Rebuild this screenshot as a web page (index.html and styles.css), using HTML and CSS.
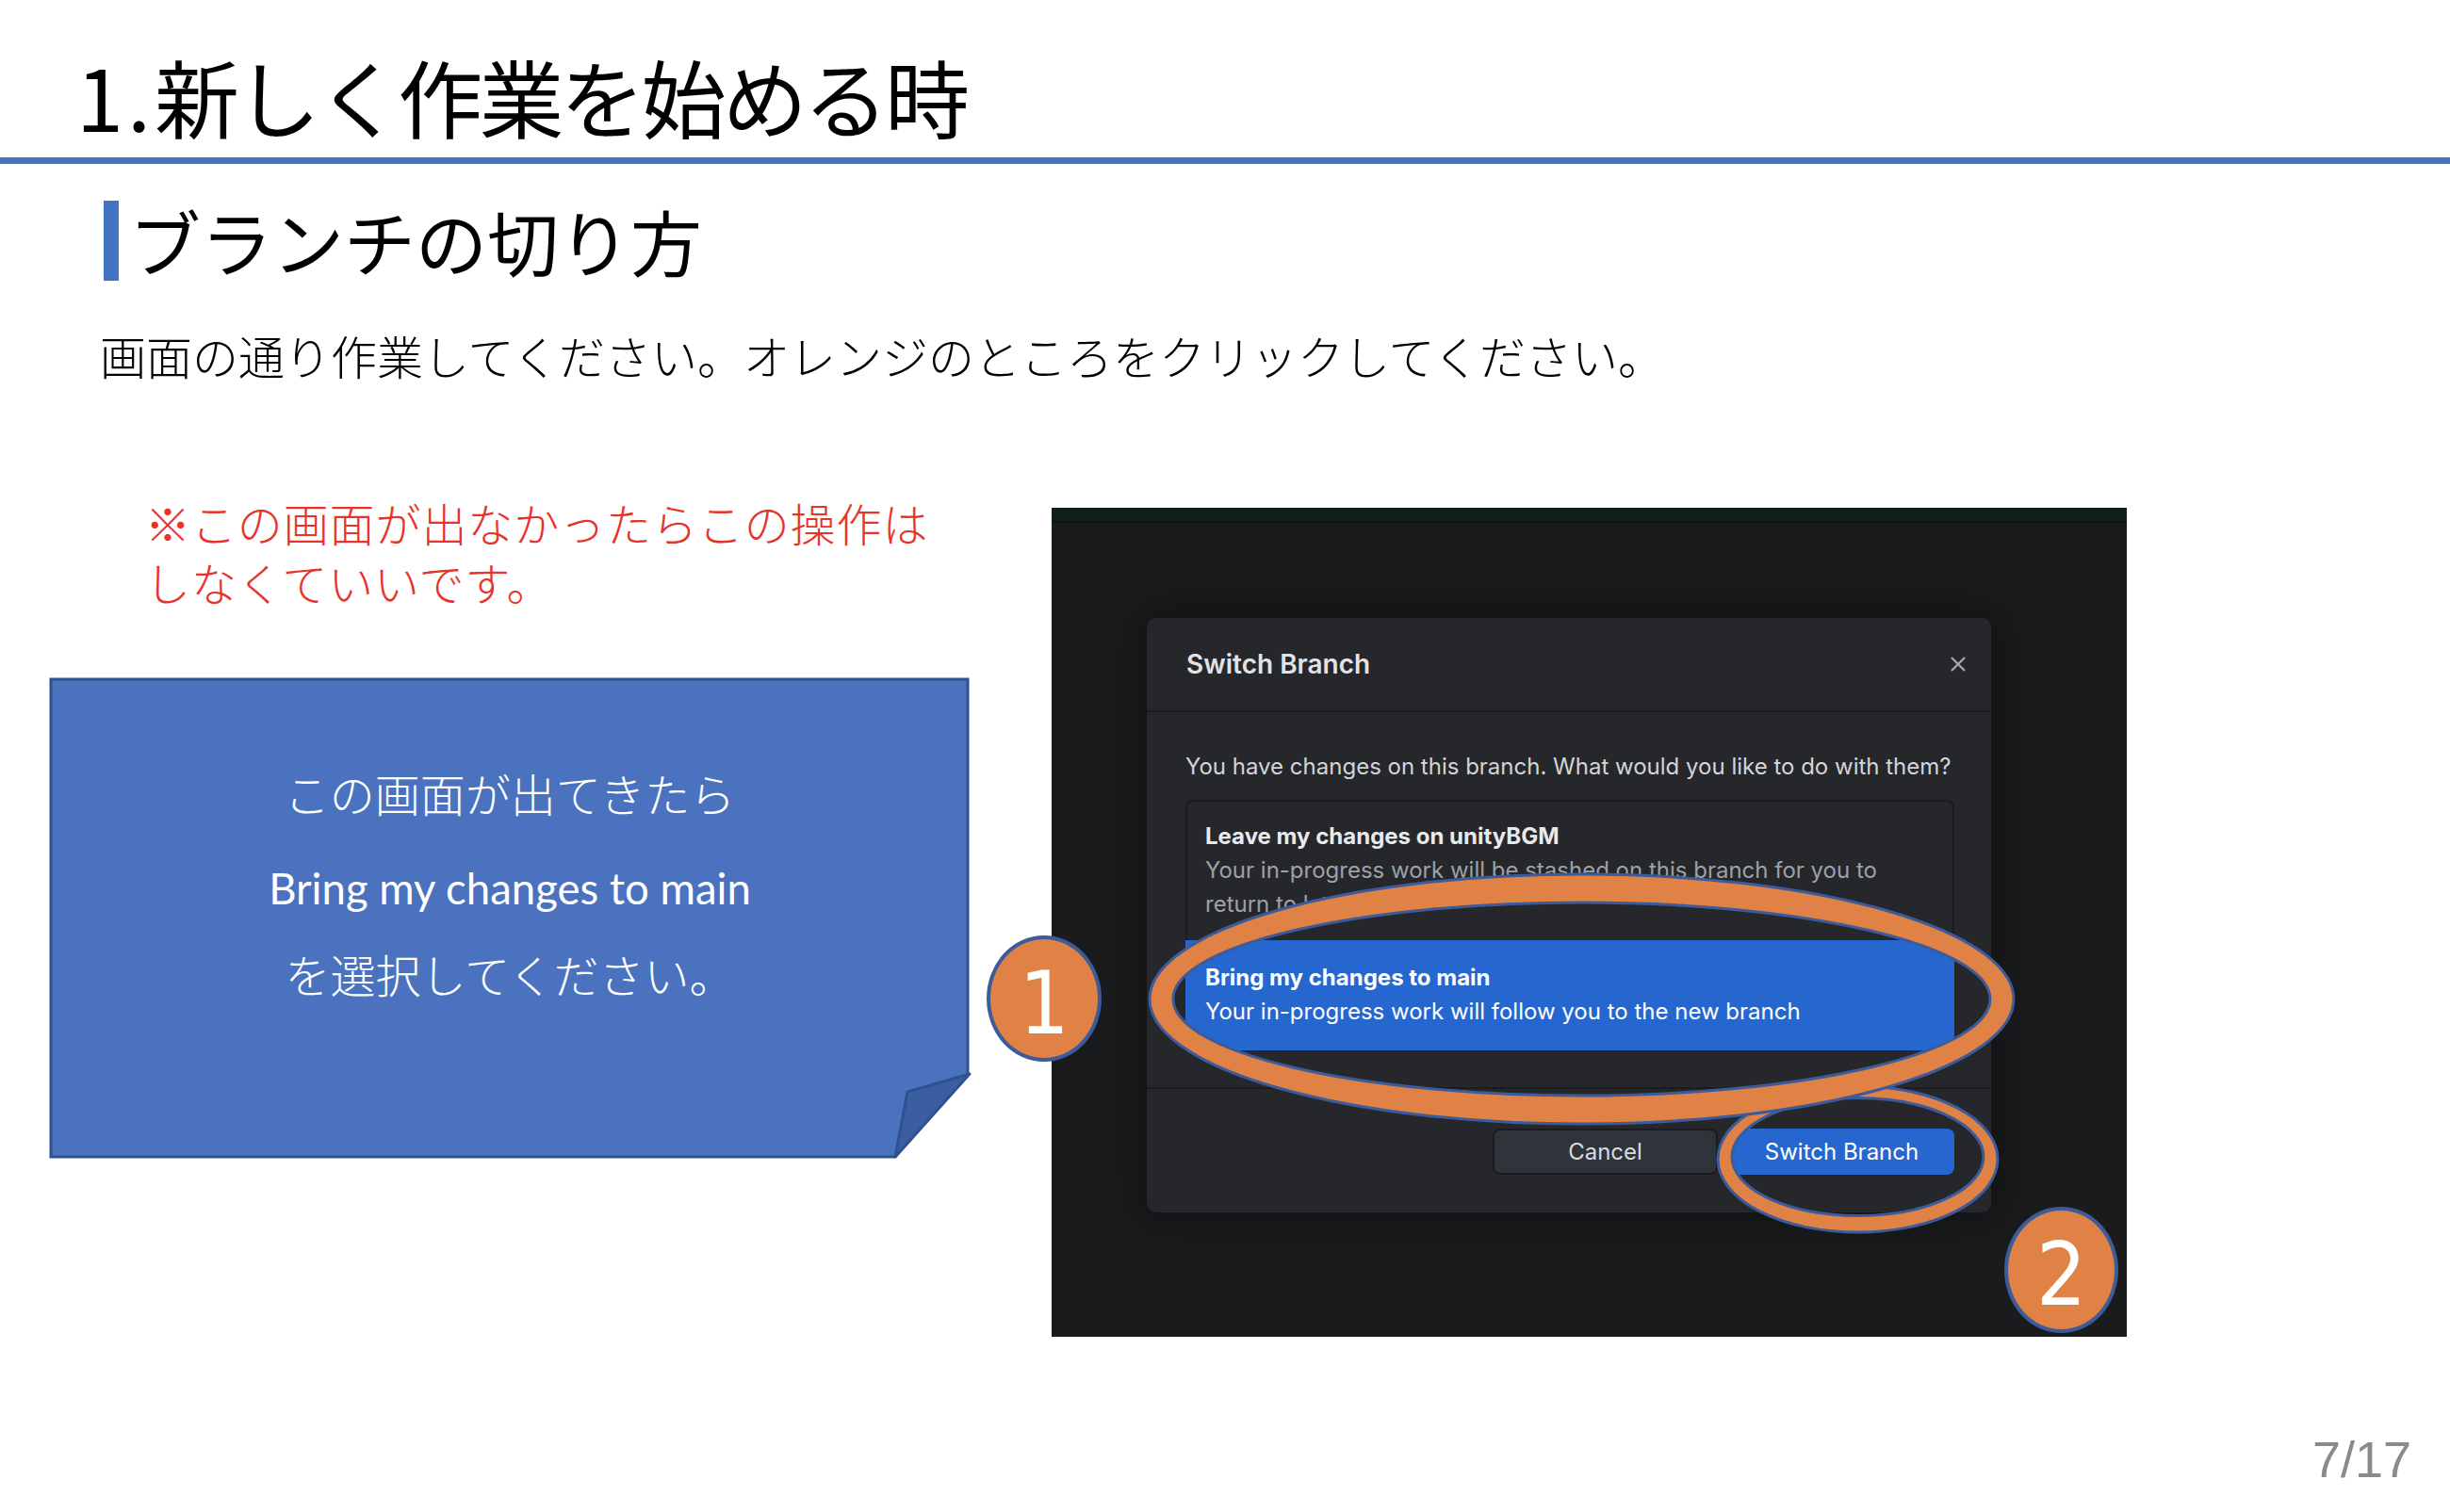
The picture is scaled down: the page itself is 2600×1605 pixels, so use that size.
FILE: index.html
```html
<!DOCTYPE html>
<html lang="ja">
<head>
<meta charset="utf-8">
<title>1.新しく作業を始める時</title>
<link rel="stylesheet" href="styles.css">
</head>
<body>
<div class="slide">
  <h1 class="title"><span class="num">1.</span>新しく作業を始める時</h1>
  <div class="rule"></div>
  <h2 class="subhead"><span class="bar"></span><span class="subhead-text">ブランチの切り方</span></h2>
  <p class="lead">画面の通り作業してください。オレンジのところをクリックしてください。</p>

  <div class="content">
    <div class="left">
      <p class="note">※この画面が出なかったらこの操作は<br>しなくていいです。</p>
      <div class="callout">
        <svg class="callout-shape" viewBox="0 0 978 512" width="978" height="512">
          <polygon class="callout-body" points="2,2 975,2 975,422 898,509 2,509"/>
          <polygon class="callout-fold" points="911,440 977,421 898,509"/>
        </svg>
        <div class="callout-text">
          <div class="cl">この画面が出てきたら</div>
          <div class="cl en">Bring my changes to main</div>
          <div class="cl">を選択してください。</div>
        </div>
      </div>
    </div>

    <div class="shot">
      <div class="shot-top"></div>
      <div class="dialog">
        <div class="dlg-head">
          <span class="dlg-title">Switch Branch</span>
          <svg class="dlg-close" viewBox="0 0 20 20" width="20" height="20"><path d="M3 3 L17 17 M17 3 L3 17"/></svg>
        </div>
        <div class="dlg-body">
          <p class="dlg-q">You have changes on this branch. What would you like to do with them?</p>
          <div class="opt opt-leave">
            <div class="opt-title">Leave my changes on unityBGM</div>
            <div class="opt-desc">Your in-progress work will be stashed on this branch for you to<br>return to later</div>
          </div>
          <div class="opt opt-bring">
            <div class="opt-title">Bring my changes to main</div>
            <div class="opt-desc">Your in-progress work will follow you to the new branch</div>
          </div>
        </div>
        <div class="dlg-foot">
          <button class="btn btn-cancel">Cancel</button>
          <button class="btn btn-primary">Switch Branch</button>
        </div>
      </div>
    </div>
  </div>

  <svg class="marks" viewBox="0 0 2600 1605" width="2600" height="1605">
    <path class="ring" fill-rule="evenodd" d="M1823,1230.5 a148.5,77.5 0 1,0 297,0 a148.5,77.5 0 1,0 -297,0 Z M1838,1228 a133.5,62.5 0 1,0 267,0 a133.5,62.5 0 1,0 -267,0 Z"/>
    <path class="ring" fill-rule="evenodd" d="M1220,1060.5 a458.5,132.5 0 1,0 917,0 a458.5,132.5 0 1,0 -917,0 Z M1245,1060.5 a433.5,102.5 0 1,0 867,0 a433.5,102.5 0 1,0 -867,0 Z"/>
  </svg>
  <div class="badge badge-1">1</div>
  <div class="badge badge-2">2</div>

  <div class="pagenum">7/17</div>
</div>
</body>
</html>
```

FILE: styles.css
```css
* { box-sizing: border-box; }
html, body { margin: 0; padding: 0; }
body {
  background: #fff;
  font-family: "Noto Sans CJK JP", sans-serif;
}
.slide {
  position: relative;
  width: 2600px;
  height: 1605px;
  overflow: hidden;
  background: #fff;
}
.title {
  margin: 0;
  height: 167px;
  padding: 56px 0 0 81px;
  font-size: 90px;
  line-height: 90px;
  font-weight: 400;
  letter-spacing: -3.9px;
  color: #000;
}
.title .num {
  letter-spacing: 4px;
}
.rule {
  height: 7px;
  background: #4472c4;
}
.subhead {
  display: flex;
  align-items: center;
  gap: 11px;
  margin: 39px 0 0 110px;
  height: 85px;
  font-size: 76px;
  line-height: 85px;
  font-weight: 400;
  letter-spacing: 0px;
  color: #000;
}
.subhead .bar {
  width: 16px;
  height: 85px;
  background: #4472c4;
}
.lead {
  margin: 49px 0 0 106px;
  font-size: 49px;
  line-height: 60px;
  font-weight: 300;
  color: #000;
}
.content {
  display: grid;
  grid-template-columns: 1116px 1141px;
  margin-top: 116px;
}
.note {
  margin: 0 0 0 154px;
  font-size: 48px;
  line-height: 63px;
  font-weight: 300;
  letter-spacing: 0.9px;
  color: #e8332a;
}
.callout {
  position: relative;
  margin: 70px 0 0 52px;
  width: 978px;
  height: 512px;
}
.callout-shape {
  position: absolute;
  left: 0;
  top: 0;
  overflow: visible;
}
.callout-body {
  fill: #4a72bf;
  stroke: #2f528f;
  stroke-width: 3;
}
.callout-fold {
  fill: #3b5ea3;
  stroke: #2f528f;
  stroke-width: 3;
  stroke-linejoin: round;
}
.callout-text {
  position: relative;
  padding-top: 74px;
  text-align: center;
  color: #fff;
  font-size: 48px;
  line-height: 96px;
  font-weight: 300;
}
.callout-text .en {
  font-family: Lato, "Noto Sans", sans-serif;
  font-size: 45.5px;
  font-weight: 400;
  padding-top: 12px;
  line-height: 84px;
}

/* screenshot */
.shot {
  margin-top: 16px;
  width: 1141px;
  height: 880px;
  background: #1a1b1d;
  display: flex;
  flex-direction: column;
  overflow: hidden;
}
.shot-top {
  height: 16px;
  flex: none;
  background: #12201a;
  border-bottom: 2px solid #111213;
}
.dialog {
  margin: 101px 0 0 101px;
  width: 896px;
  height: 631px;
  flex: none;
  background: #25272b;
  border-radius: 10px;
  box-shadow: 0 0 40px 12px rgba(0, 0, 0, 0.3);
  font-family: Inter, "Liberation Sans", sans-serif;
  display: flex;
  flex-direction: column;
  overflow: hidden;
}
.dlg-head {
  height: 100px;
  flex: none;
  border-bottom: 2px solid #1b1c1f;
  display: flex;
  align-items: center;
  justify-content: space-between;
  padding: 0 25px 0 42px;
}
.dlg-title {
  font-size: 28px;
  font-weight: 600;
  color: #e1e3e6;
}
.dlg-close path {
  stroke: #a3a7ad;
  stroke-width: 2.4;
  fill: none;
}
.dlg-body {
  padding: 40px 39px 39px 41px;
  border-bottom: 2px solid #1b1c1f;
}
.dlg-q {
  margin: 0 0 18px;
  font-size: 24px;
  line-height: 35px;
  color: #d3d5d9;
}
.opt {
  font-size: 24px;
  line-height: 36px;
}
.opt-title {
  font-weight: 700;
}
.opt-leave {
  border: 2px solid #1b1c1f;
  border-bottom: none;
  border-radius: 8px 8px 0 0;
  padding: 19px 19px 20px;
}
.opt-leave .opt-title { color: #e8eaed; }
.opt-leave .opt-desc { color: #9da1a8; }
.opt-bring {
  background: #2567cf;
  color: #fff;
  padding: 22px 21px 23px;
}
.dlg-foot {
  flex: 1;
  display: flex;
  justify-content: flex-end;
  align-items: flex-start;
  gap: 12px;
  padding: 42px 39px 0 0;
}
.btn {
  width: 239px;
  height: 49px;
  border-radius: 8px;
  font-family: Inter, "Liberation Sans", sans-serif;
  font-size: 24px;
}
.btn-cancel {
  background: #2f333a;
  border: 2px solid #1b1c1f;
  color: #d9dbde;
}
.btn-primary {
  background: #2567cf;
  border: none;
  color: #fff;
}

/* overlays */
.marks {
  position: absolute;
  left: 0;
  top: 0;
  pointer-events: none;
}
.ring {
  fill: #e08245;
  stroke: #3b5b9a;
  stroke-width: 3;
}
.badge {
  position: absolute;
  display: flex;
  align-items: center;
  justify-content: center;
  padding-top: 10px;
  background: #e08245;
  border: 4px solid #3b5b9a;
  border-radius: 50%;
  color: #fff;
  font-family: "DejaVu Sans Condensed", "DejaVu Sans", sans-serif;
  font-size: 93px;
  font-weight: 300;
}
.badge-1 { left: 1047px; top: 993px; width: 122px; height: 134px; }
.badge-2 { left: 2127px; top: 1281px; width: 121px; height: 134px; }

.pagenum {
  position: absolute;
  left: 2454px;
  top: 1518px;
  font-family: "Liberation Sans", sans-serif;
  font-size: 54px;
  color: #8a8a8a;
}
```
